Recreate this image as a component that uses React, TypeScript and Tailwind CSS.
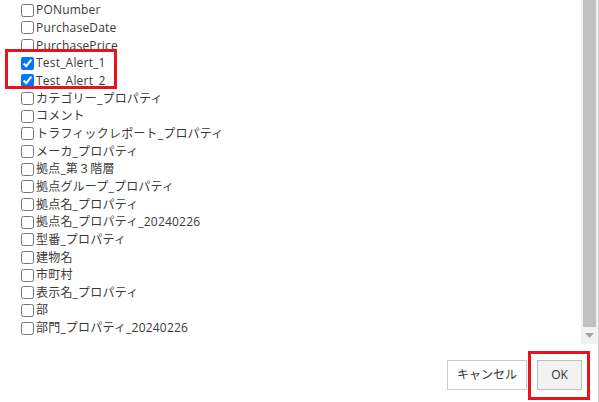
import React from "react";

const items: { label: string; checked: boolean }[] = [
  { label: "PONumber", checked: false },
  { label: "PurchaseDate", checked: false },
  { label: "PurchasePrice", checked: false },
  { label: "Test_Alert_1", checked: true },
  { label: "Test_Alert_2", checked: true },
  { label: "カテゴリー_プロパティ", checked: false },
  { label: "コメント", checked: false },
  { label: "トラフィックレポート_プロパティ", checked: false },
  { label: "メーカ_プロパティ", checked: false },
  { label: "拠点_第３階層", checked: false },
  { label: "拠点グループ_プロパティ", checked: false },
  { label: "拠点名_プロパティ", checked: false },
  { label: "拠点名_プロパティ_20240226", checked: false },
  { label: "型番_プロパティ", checked: false },
  { label: "建物名", checked: false },
  { label: "市町村", checked: false },
  { label: "表示名_プロパティ", checked: false },
  { label: "部", checked: false },
  { label: "部門_プロパティ_20240226", checked: false },
];

export default function App() {
  return (
    <div
      className="relative w-[599px] h-[402px] bg-white border-r border-[#d4d4d4] flex flex-col text-[12px] text-[#3a3a3a]"
      style={{ fontFamily: "'Open Sans', 'Noto Sans CJK JP', sans-serif" }}
    >
      <div className="flex h-[344px]">
        <div className="flex-1 pt-[1.5px] pl-[21px] overflow-hidden">
          {items.map((it) => (
            <label key={it.label} className="flex items-center h-[17.67px] whitespace-nowrap">
              <input
                type="checkbox"
                defaultChecked={it.checked}
                className="m-0 mr-[2px] w-[13px] h-[13px] accent-[#0075ff]"
              />
              <span className="tracking-[0.2px]">{it.label}</span>
            </label>
          ))}
        </div>
        <div className="w-[17px] bg-[#f1f1f1] flex flex-col items-center">
          <div className="w-[13px] mt-0 h-[327px] bg-[#c1c1c1]" />
          <div className="flex-1 flex items-center justify-center">
            <svg width="9" height="5" viewBox="0 0 9 5">
              <path d="M0 0 L9 0 L4.5 5 Z" fill="#a3a3a3" />
            </svg>
          </div>
        </div>
      </div>
      <div className="flex justify-end gap-[10px] pt-[16px] pr-[16px]">
        <button className="h-[30px] w-[80px] border border-[#cccccc] bg-white text-[12px] text-[#333]">
          キャンセル
        </button>
        <button className="h-[30px] w-[45px] border border-[#bfbfbf] bg-[#f2f2f2] text-[12px] text-[#333]">
          OK
        </button>
      </div>
      <div className="absolute left-[5px] top-[49px] w-[112px] h-[40px] border-[3px] border-[#e8141c]" />
      <div className="absolute left-[528px] top-[351px] w-[62px] h-[49px] border-[3px] border-[#e8141c]" />
    </div>
  );
}
